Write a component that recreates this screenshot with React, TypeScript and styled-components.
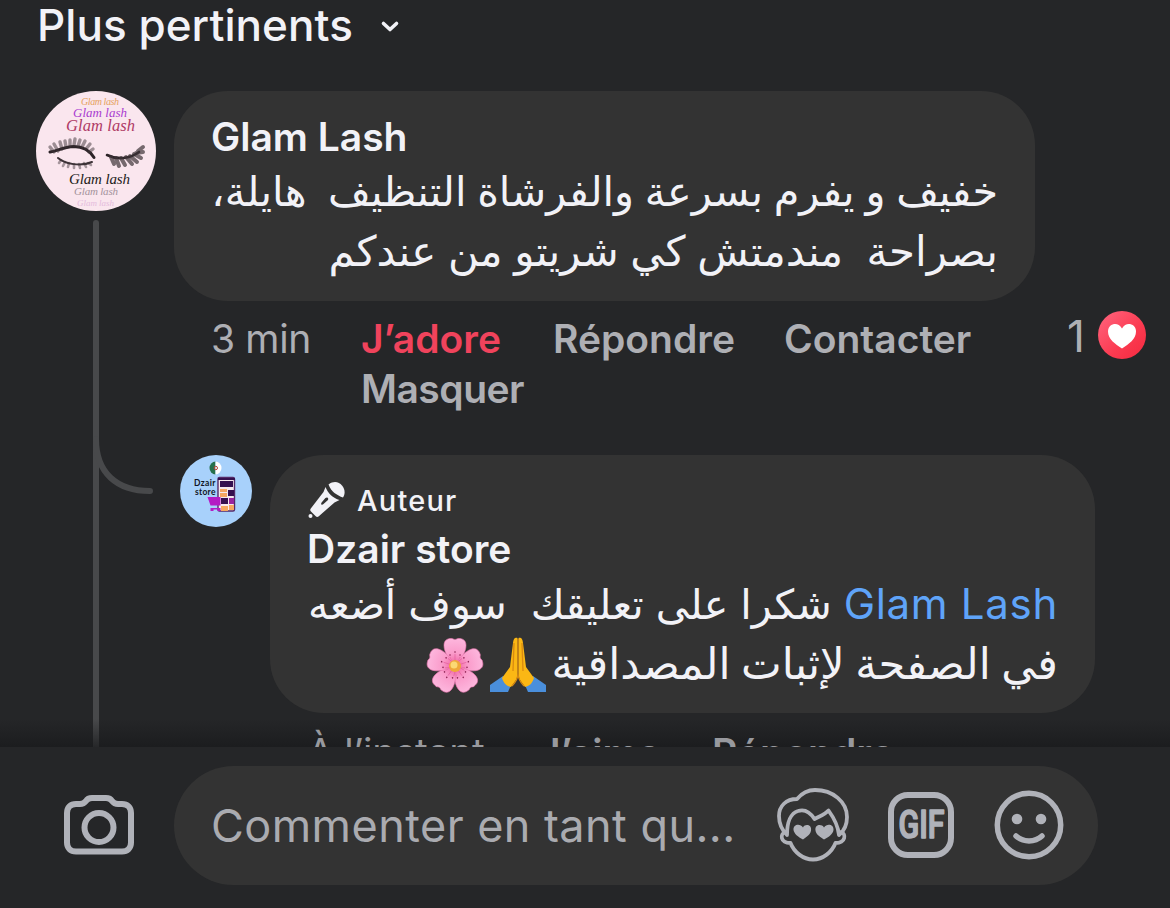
import React from 'react';
import styled, { createGlobalStyle } from 'styled-components';

const colors = {
  page: '#252628',
  bubble: '#333333',
  text: '#f2f2f7',
  muted: '#aeafb4',
  rail: '#48494b',
  love: '#f0435c',
  link: '#5fa4f9',
  icon: '#b0b2b9',
};

const GlobalStyle = createGlobalStyle`
  * { box-sizing: border-box; }
  body {
    margin: 0;
    background: ${colors.page};
    font-family: Inter, "Liberation Sans", sans-serif;
    color: ${colors.text};
  }
  svg { display: block; flex: none; }
`;

const Screen = styled.div`
  width: 1170px;
  height: 908px;
  display: flex;
  flex-direction: column;
  overflow: hidden;
  background: ${colors.page};
`;

const Feed = styled.main`
  position: relative;
  flex: none;
  height: 747px;
  overflow: hidden;
`;

const FeedShade = styled.div`
  position: absolute;
  left: 0;
  right: 0;
  bottom: 0;
  height: 28px;
  background: linear-gradient(rgba(24, 25, 27, 0), rgba(24, 25, 27, 0.7));
`;

const SortBar = styled.header`
  display: flex;
  height: 91px;
  padding-left: 37px;
  gap: 27px;
`;

const SortLabel = styled.span`
  font-size: 44px;
  font-weight: 500;
  line-height: 50px;
  letter-spacing: 0.05px;
  white-space: nowrap;
`;

const SortChevron = styled.svg`
  margin-top: 20px;
`;

const Thread = styled.section`
  display: flex;
  gap: 18px;
  padding-left: 36px;
`;

const Rail = styled.div`
  position: relative;
  width: 120px;
  height: 700px;
  display: flex;
  flex-direction: column;
  align-items: center;
  gap: 9px;
`;

const RailLine = styled.div`
  width: 6px;
  flex: 1;
  border-radius: 3px;
  background: ${colors.rail};
`;

const RailBranch = styled.svg`
  position: absolute;
  left: 57px;
  top: 345px;
`;

const Content = styled.div`
  width: 996px;
`;

const Bubble = styled.article<{ $w: number; $h: number; $top: number }>`
  width: ${(p) => p.$w}px;
  height: ${(p) => p.$h}px;
  padding: ${(p) => p.$top}px 37px 0;
  border-radius: 54px;
  background: ${colors.bubble};
`;

const Author = styled.div`
  font-size: 39px;
  font-weight: 600;
  line-height: 50px;
  white-space: nowrap;
`;

const ArabicLine = styled.p<{ $size: number; $space: number }>`
  display: flex;
  align-items: baseline;
  direction: rtl;
  margin: 0;
  height: 60px;
  font-family: "DejaVu Sans", "Noto Sans", sans-serif;
  font-size: ${(p) => p.$size}px;
  line-height: 60px;
  word-spacing: ${(p) => p.$space}px;
  white-space: pre;
`;

const Mention = styled.span`
  font-family: Inter, "Liberation Sans", sans-serif;
  font-size: 42px;
  letter-spacing: 0.7px;
  word-spacing: 0;
  color: ${colors.link};
`;

const Emoji = styled.svg<{ $gap: number }>`
  align-self: flex-start;
  margin: 2px ${(p) => p.$gap}px 0 0;
`;

const Meta = styled.div`
  display: flex;
  height: 154px;
  padding: 13px 24px 0 37px;
`;

const Time = styled.span<{ $w: number }>`
  width: ${(p) => p.$w}px;
  font-size: 39px;
  line-height: 50px;
  letter-spacing: -0.35px;
  color: ${colors.muted};
  white-space: nowrap;
`;

const Actions = styled.div`
  display: flex;
  flex-wrap: wrap;
  flex: 1;
  align-content: flex-start;
`;

const Action = styled.span<{ $w: number; $track?: number; $loved?: boolean }>`
  width: ${(p) => p.$w}px;
  font-size: 39px;
  font-weight: 600;
  line-height: 50px;
  letter-spacing: ${(p) => p.$track ?? 0}px;
  color: ${(p) => (p.$loved ? colors.love : colors.muted)};
  white-space: nowrap;
`;

const Reactions = styled.div`
  display: flex;
  gap: 13px;
  height: 50px;
  font-size: 44px;
  line-height: 44px;
  color: ${colors.muted};

  svg { margin-top: -3px; }
`;

const Reply = styled.div`
  display: flex;
  gap: 18px;
  padding-left: 6px;
`;

const Badge = styled.div`
  display: flex;
  align-items: center;
  gap: 12px;
  height: 46px;
  padding-bottom: 2px;
  font-size: 29px;
  font-weight: 500;
  letter-spacing: 1.2px;
`;

const ReplyMeta = styled.div`
  position: relative;
  z-index: 1;
  display: flex;
  padding: 15px 0 0 37px;
  opacity: 0.85;
`;

const Composer = styled.footer`
  flex: 1;
  display: flex;
  padding: 19px 72px 0 64px;
  gap: 40px;
`;

const CameraButton = styled.div`
  width: 70px;
  padding-top: 28px;
`;

const Field = styled.div`
  flex: 1;
  height: 119px;
  display: flex;
  align-items: center;
  padding: 0 34px 1px 37px;
  border-radius: 60px;
  background: ${colors.bubble};
`;

const Placeholder = styled.span`
  flex: 1;
  font-size: 45px;
  letter-spacing: 0.45px;
  color: #aaabb0;
  white-space: nowrap;
`;

const Tools = styled.div`
  display: flex;
  align-items: center;

  svg:nth-child(2) { margin: 0 40px 0 39px; }
`;

const GlamAvatar = () => (
  <svg width="120" height="120" viewBox="0 0 120 120" fontFamily="'Liberation Serif', serif" fontStyle="italic">
    <circle cx="60" cy="60" r="60" fill="#fae6ee" />
    <text x="45" y="13.500" fontSize="10" textLength="38" fill="#e5a25f">Glam lash</text>
    <text x="37" y="26" fontSize="13" textLength="54" fill="#a93bd0">Glam lash</text>
    <text x="30" y="40" fontSize="16.500" textLength="69" fill="#b03b66">Glam lash</text>
    <g fill="none" stroke="#3d3338" strokeLinecap="round">
      <path d="M14 61c7-1 13-5 24-5.500 9 0 15 3 20 11" strokeWidth="3" stroke="#2c2327" />
      <path d="M22 67c7 6 23 9 34 4" strokeWidth="2" />
      <path d="M18 61l-4-5M22 60l-4-7M26 58l-2-7M30 56l-1-6M34 55l0-6M38 54l1-6M42 55l2-6M46 56l3-6M50 58l4-5M53 61l4-3" strokeWidth="3.400" opacity=".5" />
      <path d="M25 69l-2 3M29 71l-2 4M33 72l-1 4M38 73v4M43 73l1 4M48 72l2 4M52 72l3 2" strokeWidth="2.600" opacity=".45" />
      <path d="M71 64c10 5 23 4 32-3" strokeWidth="2.600" stroke="#2c2327" />
      <path d="M75 66l3 7M80 67l3 8M85 67l4 7M90 66l6 7M94 65l7 6M98 63l7 4M100 62l7-1M102 60l5-4" strokeWidth="4" opacity=".7" />
    </g>
    <text x="33" y="93" fontSize="15" textLength="61" fill="#241c20">Glam lash</text>
    <text x="38" y="104" fontSize="11" textLength="44" fill="#a3929b">Glam lash</text>
    <text x="41" y="115" fontSize="9" textLength="37" fill="#e4bbdc">Glam lash</text>
  </svg>
);

const StoreAvatar = () => (
  <svg width="72" height="72" viewBox="0 0 72 72">
    <circle cx="36" cy="36" r="36" fill="#a8d1fb" />
    <path d="M35.500 6.500a6 6.500 0 0 0 0 13Z" fill="#26704c" />
    <path d="M35.500 6.500a6 6.500 0 0 1 0 13Z" fill="#fff" />
    <circle cx="35.800" cy="13" r="1.700" fill="none" stroke="#b8413a" strokeWidth="1" />
    <rect x="38" y="22.500" width="16.500" height="33.500" rx="1.500" fill="#f5e9ee" stroke="#542a68" strokeWidth="1.400" />
    <path d="M38 23h17v2H38zM40 26h13v6H40zM48 35h6v6h-6zM41 43h7v6h-7z" fill="#35104f" />
    <path d="M40 34h7v3h-7zM40 38h7v4h-7zM49 50h5v5h-5zM41 51h7v5h-7z" fill="#f5a762" />
    <path d="M49 43h5v6h-5z" fill="#99249f" />
    <path d="M27.500 42h13v8.500h-10V53h10v3h-3v-1.500h-4V56h-3v-5.500Z" fill="#b41bc4" />
    <g fontFamily="Lato, sans-serif" fontWeight="700" fontSize="8.500" fill="#101525">
      <text x="14" y="31.300" textLength="21.500">Dzair</text>
      <text x="15" y="40.300" textLength="20.500">store</text>
    </g>
  </svg>
);

const LoveIcon = () => (
  <svg width="48" height="48" viewBox="0 0 48 48">
    <defs>
      <linearGradient id="love" x1="0" y1="0" x2="1" y2="1">
        <stop offset="0" stopColor="#ff6680" />
        <stop offset="0.6" stopColor="#fb3a50" />
        <stop offset="1" stopColor="#f5293f" />
      </linearGradient>
    </defs>
    <circle cx="24" cy="24" r="24" fill="url(#love)" />
    <path d="M24 17.500C22 13.500 18.500 12.500 16 13c-4 .700-6 4-6 7.500C10 28 17 33 24 37.500 31 33 38 28 38 20.500 38 17 36 13.700 32 13c-2.500-.500-6 .500-8 4.500Z" fill="#fff" />
  </svg>
);

const MicIcon = () => (
  <svg width="38" height="38" viewBox="-1 -0.500 38 38" fill={colors.text}>
    <path d="M20.500 3C26-1 31 .500 34 4c3 3.500 3.500 8 1 12-6-2-12-6-14.500-13Z" />
    <path fillRule="evenodd" d="M17.500 5.500c2.500 6.500 7.500 11 14 13l-5 2.500L10.500 35c-1 .800-2 .500-3-.500L3 30c-1-1-1-2-.200-3L15.500 10.500Zm-2.300 17.300 4.500-4c1.500-2-.500-3.600-2.300-2.200l-3.800 4.300c-1.200 1.700.2 3 1.600 1.900Z" />
    <circle cx="2.500" cy="34.500" r="2" />
  </svg>
);

const PrayEmoji = () => (
  <Emoji $gap={4} width="58" height="58" viewBox="0 0 58 58">
    <path d="M1 56V49l13-9 9 7-4 9Z" fill="#4a8fdc" />
    <path d="M57 56V49l-13-9-9 7 4 9Z" fill="#4a8fdc" />
    <path d="M28.500 2c-3-1-4 1-4.500 5l-3 24-8 11c2 6 5 8 9 9l5-7c1-2 1.500-4 1.500-7Z" fill="#fbb714" />
    <path d="M29.500 2c3-1 4 1 4.500 5l3 24 8 11c-2 6-5 8-9 9l-5-7c-1-2-1.500-4-1.500-7Z" fill="#fbb714" />
    <path d="M29 3v34c0 5-2 9-6 13M29 37c0 5 2 9 6 13M25 7l-1 28M33 7l1 28" fill="none" stroke="#d98a10" strokeWidth="1.300" />
  </Emoji>
);

const FlowerEmoji = () => (
  <Emoji $gap={5} width="58" height="58" viewBox="0 0 58 58">
    <defs>
      <radialGradient id="petal" gradientUnits="userSpaceOnUse" cx="29" cy="30" r="29">
        <stop offset="0" stopColor="#ee5c9c" />
        <stop offset="0.45" stopColor="#fa9ccb" />
        <stop offset="1" stopColor="#fdb9df" />
      </radialGradient>
    </defs>
    {[0, 72, 144, 216, 288].map((angle) => (
      <g key={angle} transform={`rotate(${angle} 29 30)`}>
        <path d="M29 30C23 24 18 16 18 9.500c0-5 3-7 7-7 1.500-.500 2.500 1 4 1s2.500-1.500 4-1c4 0 7 2 7 7 0 6.500-5 14.500-11 20.500Z" fill="url(#petal)" stroke="#ed78b2" strokeWidth=".6" />
        <path d="M29 26v-8M26 26l-2-5M32 26l2-5" stroke="#e2589a" strokeWidth=".6" />
        <g fill="#8e2453">
          <circle cx="29" cy="16" r=".8" />
          <circle cx="24" cy="19" r=".8" />
          <circle cx="34" cy="19" r=".8" />
        </g>
      </g>
    ))}
    <circle cx="29" cy="30" r="6" fill="#efa83a" />
    <circle cx="28" cy="29" r="3.500" fill="#fbd974" />
  </Emoji>
);

const CameraIcon = () => (
  <svg width="70" height="62" viewBox="0 -0.500 70 62" fill="none" stroke={colors.icon} strokeWidth="6">
    <path d="M12 9.500h4c3 0 4.500-1 6-3C23.500 4 25 3.500 28 3.500h14c3 0 4.500.500 6 3 1.500 2 3 3 6 3h4c5.500 0 9 3.500 9 9v29.500c0 5.500-3.500 9-9 9H12c-5.500 0-9-3.500-9-9V18.500c0-5.500 3.500-9 9-9Z" />
    <circle cx="35" cy="33" r="14.500" />
  </svg>
);

const AvatarIcon = () => (
  <svg width="72" height="74" viewBox="0 0 72 74" fill="none" stroke={colors.icon} strokeWidth="3.800" strokeLinejoin="round" strokeLinecap="round">
    <path d="M10 47C5 42 2 36 2 28 2 18 9 11 20 11 25 5 31 2 38 2c18 0 32 12 32 27 0 7-3 14-8 18-1-10-5-17-10.500-24.500C48 26.500 43 28 37.500 31 33 24 27 21 21 23c-7 2-11 11-11 24Z" />
    <path d="M8 44c-5 2-5 11 5.500 11C17 64 26 71.500 36 71.500S55 64 58.500 55C69 55 69 46 64.500 44" />
    <path stroke="none" fill={colors.icon} d="M26 39.500c2-4 9-3 8 3-.5 4-4.500 6.500-8 9-5-2.500-9-6-9.500-9.500-.5-5.500 6.500-7 9.500-2.500ZM47 39.500c3-4.500 10-3 9.500 2.500C56 46 52 49 47 51.500c-4-2.500-8-5-8.500-9-1-6 6-7 8.500-3Z" />
  </svg>
);

const GifIcon = () => (
  <svg width="66" height="66" viewBox="0 0 66 66">
    <rect x="3" y="3" width="60" height="60" rx="17" fill="none" stroke={colors.icon} strokeWidth="6" />
    <text x="10.500" y="46" fontFamily="Roboto, sans-serif" fontWeight="500" fontSize="38" textLength="46" lengthAdjust="spacingAndGlyphs" fill={colors.icon} stroke={colors.icon} strokeWidth="1.600" strokeLinejoin="round">GIF</text>
  </svg>
);

const SmileIcon = () => (
  <svg width="70" height="70" viewBox="0 0 70 70" fill="none" stroke={colors.icon} strokeWidth="5.500" strokeLinecap="round">
    <circle cx="35" cy="35" r="31.700" />
    <path d="M22 46c7 6.500 19 6.500 26 0" />
    <circle cx="23" cy="29" r="5.300" fill={colors.icon} stroke="none" />
    <circle cx="47" cy="29" r="5.300" fill={colors.icon} stroke="none" />
  </svg>
);

export default function App() {
  return (
    <Screen>
      <GlobalStyle />
      <Feed>
        <SortBar>
          <SortLabel>Plus pertinents</SortLabel>
          <SortChevron width="20" height="14" viewBox="0 0 20 14" fill="none" stroke={colors.text} strokeWidth="3.600" strokeLinecap="round" strokeLinejoin="round">
            <path d="M3.500 3.500l6.500 6 6.500-6" />
          </SortChevron>
        </SortBar>
        <Thread>
          <Rail>
            <GlamAvatar />
            <RailLine />
            <RailBranch width="64" height="60" viewBox="0 0 64 60" fill="none" stroke={colors.rail} strokeWidth="6" strokeLinecap="round">
              <path d="M3 3C3 37 24 55 57 55" />
            </RailBranch>
          </Rail>
          <Content>
            <Bubble $w={861} $h={210} $top={21}>
              <Author>Glam Lash</Author>
              <ArabicLine $size={41.4} $space={-2.4}>{'خفيف و يفرم بسرعة والفرشاة التنظيف  هايلة،'}</ArabicLine>
              <ArabicLine $size={42} $space={-1.6}>{'بصراحة  مندمتش كي شريتو من عندكم'}</ArabicLine>
            </Bubble>
            <Meta>
              <Time $w={150}>3 min</Time>
              <Actions>
                <Action $w={192} $loved>J’adore</Action>
                <Action $w={231}>Répondre</Action>
                <Action $w={200}>Contacter</Action>
                <Action $w={200} $track={-0.5}>Masquer</Action>
              </Actions>
              <Reactions>
                1
                <LoveIcon />
              </Reactions>
            </Meta>
            <Reply>
              <StoreAvatar />
              <div>
                <Bubble $w={825} $h={258} $top={23}>
                  <Badge>
                    <MicIcon />
                    Auteur
                  </Badge>
                  <Author>Dzair store</Author>
                  <ArabicLine $size={41.2} $space={-1.1}>
                    <Mention>Glam Lash</Mention>
                    <span>{' شكرا على تعليقك  سوف أضعه'}</span>
                  </ArabicLine>
                  <ArabicLine $size={43.2} $space={-3.1}>
                    <span>في الصفحة لإثبات المصداقية</span>
                    <PrayEmoji />
                    <FlowerEmoji />
                  </ArabicLine>
                </Bubble>
                <ReplyMeta>
                  <Time $w={231}>À l’instant</Time>
                  <Action $w={174}>J’aime</Action>
                  <Action $w={200}>Répondre</Action>
                </ReplyMeta>
              </div>
            </Reply>
          </Content>
        </Thread>
        <FeedShade />
      </Feed>
      <Composer>
        <CameraButton>
          <CameraIcon />
        </CameraButton>
        <Field>
          <Placeholder>Commenter en tant qu...</Placeholder>
          <Tools>
            <AvatarIcon />
            <GifIcon />
            <SmileIcon />
          </Tools>
        </Field>
      </Composer>
    </Screen>
  );
}
